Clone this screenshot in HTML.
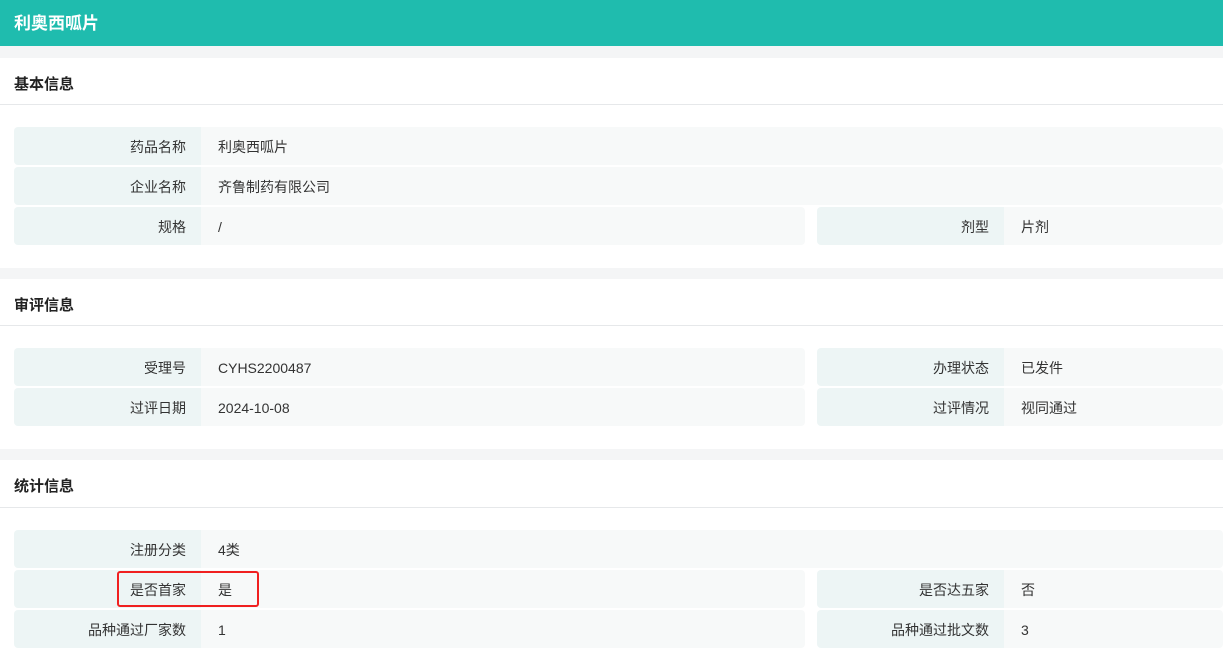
<!DOCTYPE html>
<html><head><meta charset="utf-8"><style>
*{margin:0;padding:0;box-sizing:border-box}
body{width:1223px;height:654px;background:#f4f5f6;font-family:"Liberation Sans","Noto Sans CJK SC",sans-serif;position:relative;overflow:hidden;color:#333}
.hd{position:absolute;left:0;top:0;width:1223px;height:46px;background:#1fbcae;color:#fff;font-weight:bold;font-size:17px;line-height:48px;padding-left:14px}
.card{position:absolute;left:0;width:1223px;background:#fff}
.t{position:absolute;left:14px;font-weight:bold;font-size:15px;color:#222}
.bl{position:absolute;left:0;width:1223px;height:1px;background:#e6e8ea}
.l,.v{position:absolute;height:38px;line-height:40px;font-size:14px}
.l{background:#edf5f5;text-align:right;padding-right:15px;border-radius:4px 0 0 4px}
.v{background:#f7f9f9;padding-left:17px;border-radius:0 4px 4px 0}
.red{position:absolute;left:117px;top:571px;width:142px;height:36px;border:2px solid #f02020;border-radius:3px}
</style></head><body>
<div class="hd">利奥西呱片</div>
<div class="card" style="top:58px;height:210px"></div>
<div class="t" style="top:73px">基本信息</div><div class="bl" style="top:104px"></div>
<div class="l" style="left:14px;top:127px;width:187px">药品名称</div><div class="v" style="left:201px;top:127px;width:1022px">利奥西呱片</div>
<div class="l" style="left:14px;top:167px;width:187px">企业名称</div><div class="v" style="left:201px;top:167px;width:1022px">齐鲁制药有限公司</div>
<div class="l" style="left:14px;top:207px;width:187px">规格</div><div class="v" style="left:201px;top:207px;width:604px">/</div>
<div class="l" style="left:817px;top:207px;width:187px">剂型</div><div class="v" style="left:1004px;top:207px;width:219px">片剂</div>

<div class="card" style="top:279px;height:170px"></div>
<div class="t" style="top:294px">审评信息</div><div class="bl" style="top:325px"></div>
<div class="l" style="left:14px;top:348px;width:187px">受理号</div><div class="v" style="left:201px;top:348px;width:604px">CYHS2200487</div>
<div class="l" style="left:817px;top:348px;width:187px">办理状态</div><div class="v" style="left:1004px;top:348px;width:219px">已发件</div>
<div class="l" style="left:14px;top:388px;width:187px">过评日期</div><div class="v" style="left:201px;top:388px;width:604px">2024-10-08</div>
<div class="l" style="left:817px;top:388px;width:187px">过评情况</div><div class="v" style="left:1004px;top:388px;width:219px">视同通过</div>

<div class="card" style="top:460px;height:194px"></div>
<div class="t" style="top:475px">统计信息</div><div class="bl" style="top:507px"></div>
<div class="l" style="left:14px;top:530px;width:187px">注册分类</div><div class="v" style="left:201px;top:530px;width:1022px">4类</div>
<div class="l" style="left:14px;top:570px;width:187px">是否首家</div><div class="v" style="left:201px;top:570px;width:604px">是</div>
<div class="l" style="left:817px;top:570px;width:187px">是否达五家</div><div class="v" style="left:1004px;top:570px;width:219px">否</div>
<div class="l" style="left:14px;top:610px;width:187px">品种通过厂家数</div><div class="v" style="left:201px;top:610px;width:604px">1</div>
<div class="l" style="left:817px;top:610px;width:187px">品种通过批文数</div><div class="v" style="left:1004px;top:610px;width:219px">3</div>
<div class="red"></div>
</body></html>
